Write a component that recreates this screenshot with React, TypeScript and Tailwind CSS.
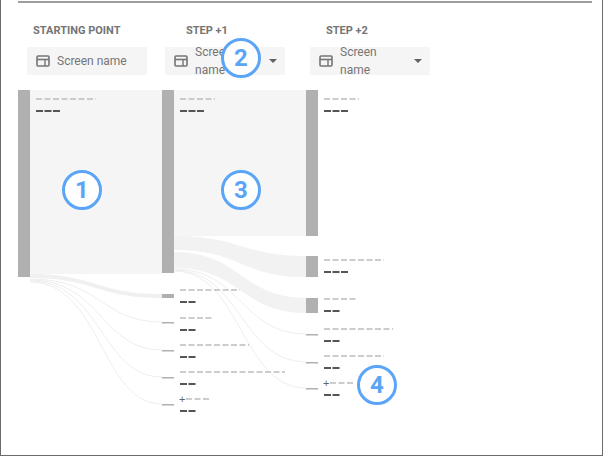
import React from 'react';

const Lbl = ({ x, y, w1, w2, plus }: { x: number; y: number; w1: number; w2: number; plus?: boolean }) => (
  <g>
    {plus && <text x={x - 1} y={y + 4} fontSize="11" fill="#666" fontFamily="Liberation Sans, sans-serif">+</text>}
    <line x1={plus ? x + 6 : x} y1={y} x2={x + w1} y2={y} stroke="#bdbdbd" strokeWidth="1.5" strokeDasharray="6 2.5" />
    <line x1={x} y1={y + 12} x2={x + w2} y2={y + 12} stroke="#555" strokeWidth="2" strokeDasharray="7 1.5" />
  </g>
);

const Badge = ({ n, x, y }: { n: number; x: number; y: number }) => (
  <div
    className="absolute w-[40px] h-[40px] rounded-full border-[3px] border-[#5aa5f7] bg-white flex items-center justify-center text-[#5aa5f7] text-[24px] font-bold leading-none"
    style={{ left: x - 20, top: y - 20 }}
  >
    {n}
  </div>
);

const ScreenIcon = () => (
  <svg width="14" height="12" viewBox="0 0 14 12">
    <rect x="1" y="1" width="12" height="10" rx="1" fill="none" stroke="#757575" strokeWidth="1.6" />
    <line x1="1" y1="4.5" x2="13" y2="4.5" stroke="#757575" strokeWidth="1.6" />
    <line x1="9" y1="4.5" x2="9" y2="11" stroke="#757575" strokeWidth="1.4" />
  </svg>
);

const Drop = ({ arrow, text }: { arrow?: boolean; text: string }) => (
  <div className="w-[120px] h-[28px] bg-[#f5f5f5] flex items-center pl-[9px] pr-[8px] gap-[7px] text-[12px] text-[#757575]">
    <ScreenIcon />
    <span className="flex-1">{text}</span>
    {arrow && <span className="w-0 h-0 border-l-[4px] border-r-[4px] border-t-[4px] border-l-transparent border-r-transparent border-t-[#616161]" />}
  </div>
);

export default function App() {
  const small2 = [294, 322, 350, 377, 404];
  const thin3 = [334, 362, 388];
  return (
    <div className="relative w-[603px] h-[456px] bg-white border-l border-r border-b border-[#6b6b6b] overflow-hidden" style={{ fontFamily: 'Roboto, "Liberation Sans", sans-serif' }}>
      <div className="absolute left-[17px] right-[10px] top-[1px] h-[2px] bg-[#9e9e9e]" />
      <div className="flex pt-[23px] pl-[26px]">
        <div className="w-[138px]">
          <div className="text-[11px] font-bold text-[#757575] pl-[6px] mb-[7px]">STARTING POINT</div>
          <Drop text="Screen name" />
        </div>
        <div className="w-[145px]">
          <div className="text-[11px] font-bold text-[#757575] pl-[21px] mb-[7px]">STEP +1</div>
          <Drop text="Screen name" arrow />
        </div>
        <div>
          <div className="text-[11px] font-bold text-[#757575] pl-[16px] mb-[7px]">STEP +2</div>
          <Drop text="Screen name" arrow />
        </div>
      </div>
      <svg className="absolute left-0 top-0" width="603" height="456">
        {/* flows */}
        <rect x="29" y="90" width="132" height="184" fill="#f5f5f5" />
        <rect x="173" y="90" width="132" height="146" fill="#f5f5f5" />
        <path d="M173 236 C240 236 240 256 305 256 L305 277 C240 277 240 250 173 250 Z" fill="#f2f2f2" />
        <path d="M173 252 C240 252 240 298 305 298 L305 313 C240 313 240 268 173 268 Z" fill="#f2f2f2" />
        <path d="M29 274 C95 274 95 294 161 294 L161 298 C95 298 95 278 29 278 Z" fill="#f0f0f0" />
        {small2.slice(1).map((y, i) => (
          <path key={y} d={`M29 ${279 + i} C100 ${279 + i} 100 ${y} 161 ${y}`} fill="none" stroke="#eeeeee" strokeWidth="1" />
        ))}
        {thin3.map((y, i) => (
          <path key={y} d={`M173 ${269 + i} C240 ${269 + i} 240 ${y} 305 ${y}`} fill="none" stroke="#eeeeee" strokeWidth="1" />
        ))}
        {/* bars */}
        <rect x="17" y="90" width="12" height="187" fill="#b0b0b0" />
        <rect x="161" y="90" width="12" height="183" fill="#b0b0b0" />
        <rect x="305" y="90" width="12" height="146" fill="#b0b0b0" />
        <rect x="305" y="256" width="12" height="21" fill="#b0b0b0" />
        <rect x="305" y="298" width="12" height="15" fill="#b0b0b0" />
        <rect x="161" y="294" width="12" height="4" fill="#b0b0b0" />
        {small2.slice(1).map((y) => (
          <rect key={y} x="161" y={y} width="12" height="1.5" fill="#b0b0b0" />
        ))}
        {thin3.map((y) => (
          <rect key={y} x="305" y={y} width="12" height="1.5" fill="#b0b0b0" />
        ))}
        {/* labels */}
        <Lbl x={35} y={99} w1={60} w2={25} />
        <Lbl x={179} y={99} w1={35} w2={25} />
        <Lbl x={323} y={99} w1={35} w2={25} />
        <Lbl x={179} y={290} w1={60} w2={17} />
        <Lbl x={179} y={318} w1={33} w2={17} />
        <Lbl x={179} y={345} w1={69} w2={17} />
        <Lbl x={179} y={372} w1={105} w2={17} />
        <Lbl x={179} y={399} w1={31} w2={17} plus />
        <Lbl x={323} y={260} w1={60} w2={25} />
        <Lbl x={323} y={299} w1={34} w2={17} />
        <Lbl x={323} y={329} w1={69} w2={17} />
        <Lbl x={323} y={356} w1={60} w2={17} />
        <Lbl x={323} y={383} w1={31} w2={17} plus />
      </svg>
      <Badge n={1} x={81} y={190} />
      <Badge n={2} x={240} y={58} />
      <Badge n={3} x={240} y={190} />
      <Badge n={4} x={376} y={385} />
    </div>
  );
}
